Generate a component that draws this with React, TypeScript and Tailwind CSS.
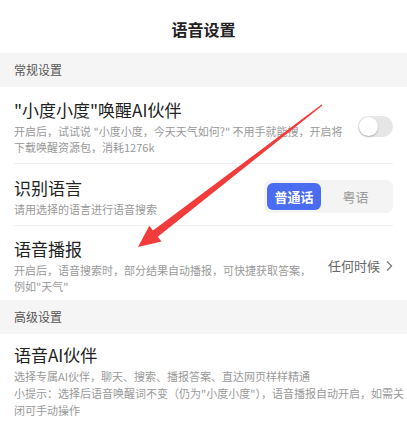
const font = { fontFamily: '"Noto Sans CJK SC", "Noto Sans", sans-serif' }

function Toggle() {
  return (
    <div className="relative h-[21px] w-[35px] shrink-0 rounded-full bg-[#e6e6e6]">
      <div className="absolute left-[1px] top-[1px] h-[19px] w-[19px] rounded-full bg-white shadow-[0_1px_2px_rgba(0,0,0,0.25)]" />
    </div>
  )
}

function Section({ title }: { title: string }) {
  return (
    <div className="flex h-[34px] items-center bg-[#f5f5f5] px-[14px] text-[12px] text-[#555]">{title}</div>
  )
}

export default function App() {
  return (
    <div className="relative h-[424px] w-[407px] overflow-hidden bg-white" style={font}>
      <div className="flex h-[53px] items-center justify-center pt-[4px] text-[16px] font-bold text-[#222]">语音设置</div>
      <Section title="常规设置" />

      <div className="px-[14px]">
        <div className="flex items-center justify-between border-b border-[#efefef] pb-[8px] pt-[11px]">
          <div className="whitespace-nowrap">
            <div className="text-[17px] leading-[24px] text-[#222]">"小度小度"唤醒AI伙伴</div>
            <div className="mt-[1px] text-[11px] leading-[16px] text-[#999]">
              <div>开启后，试试说 "小度小度，今天天气如何?" 不用手就能搜，开启将</div>
              <div>下载唤醒资源包，消耗1276k</div>
            </div>
          </div>
          <Toggle />
        </div>

        <div className="flex items-center justify-between border-b border-[#efefef] pb-[8px] pt-[12px]">
          <div className="whitespace-nowrap">
            <div className="text-[17px] leading-[24px] text-[#222]">识别语言</div>
            <div className="mt-[1px] text-[11px] leading-[16px] text-[#999]">请用选择的语言进行语音搜索</div>
          </div>
          <div className="flex h-[33px] w-[129px] items-center rounded-[7px] bg-[#f4f4f4] p-[3px]">
            <div className="flex h-[27px] w-[54px] items-center justify-center rounded-[6px] bg-[#4a6cf0] text-[13px] font-bold text-white">普通话</div>
            <div className="flex flex-1 items-center justify-center text-[13px] text-[#999]">粤语</div>
          </div>
        </div>

        <div className="flex items-center justify-between pb-[6px] pt-[11px]">
          <div className="whitespace-nowrap">
            <div className="text-[17px] leading-[24px] text-[#222]">语音播报</div>
            <div className="mt-[1px] text-[11px] leading-[16px] text-[#999]">
              <div>开启后，语音搜索时，部分结果自动播报，可快捷获取答案，</div>
              <div>例如"天气"</div>
            </div>
          </div>
          <div className="flex shrink-0 items-center gap-[5px] whitespace-nowrap text-[13px] text-[#666]">
            <span>任何时候</span>
            <svg width="8" height="12" viewBox="0 0 8 12" fill="none" stroke="#777" strokeWidth="1.3">
              <path d="M2 1.5l4.5 4.5L2 10.5" />
            </svg>
          </div>
        </div>
      </div>

      <Section title="高级设置" />

      <div className="px-[14px] pt-[9px]">
        <div className="text-[17px] leading-[24px] text-[#222]">语音AI伙伴</div>
        <div className="mt-[1px] whitespace-nowrap text-[11px] leading-[17px] text-[#999]">
          <div>选择专属AI伙伴，聊天、搜索、播报答案、直达网页样样精通</div>
          <div>小提示：选择后语音唤醒词不变（仍为"小度小度"），语音播报自动开启，如需关</div>
          <div>闭可手动操作</div>
        </div>
      </div>

      <svg className="pointer-events-none absolute left-0 top-0" width="407" height="424" viewBox="0 0 407 424">
        <polygon
          points="322.4,105.4 157.8,236.8 161.5,241.5 138,247 149.3,225.7 153,230.4 321.6,104.6"
          fill="#f23b3b"
        />
      </svg>
    </div>
  )
}
